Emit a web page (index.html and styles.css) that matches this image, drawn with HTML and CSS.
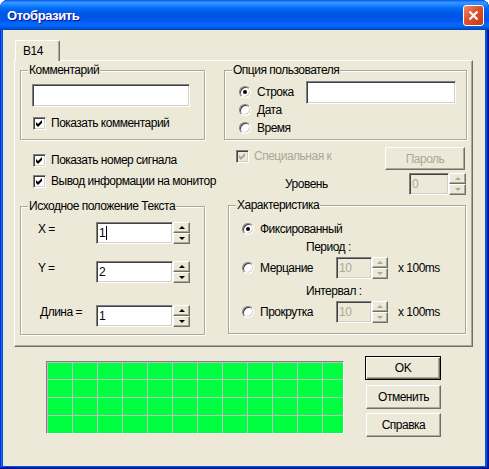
FILE: index.html
```html
<!DOCTYPE html>
<html>
<head>
<meta charset="UTF-8">
<title>Отобразить</title>
<link rel="stylesheet" href="styles.css">
</head>
<body>

<div class="window">

<div class="titlebar">
<span class="title">Отобразить</span>
<span class="close"><svg width="13" height="13" viewBox="0 0 13 13"><path d="M2.5 2.5 L10.5 10.5 M10.5 2.5 L2.5 10.5" stroke="#fff" stroke-width="2.2"/></svg></span>
</div>

<div class="client">

<div class="tabs"><div class="tab">B14</div></div>

<div class="panel">

<!-- comment / user option -->
<div class="row1">
<div class="group g-comment">
<span class="legend">Комментарий</span>
<div class="edit comment-edit"></div>
<div class="check comment-check"><span class="box"><svg width="9" height="9" viewBox="0 0 9 9"><polygon points="1,3 3,5 7,1 7,4 3,8 1,6"/></svg></span>Показать комментарий</div>
</div>
<div class="group g-user">
<span class="legend">Опция пользователя</span>
<div class="opt first"><span class="radio on"></span><span class="opt-text">Строка</span><div class="edit user-edit"></div></div>
<div class="opt"><span class="radio"></span><span class="opt-text">Дата</span></div>
<div class="opt"><span class="radio"></span><span class="opt-text">Время</span></div>
</div>
</div>

<!-- checkboxes / password -->
<div class="row2">
<div class="row2-left">
<div class="check first"><span class="box"><svg width="9" height="9" viewBox="0 0 9 9"><polygon points="1,3 3,5 7,1 7,4 3,8 1,6"/></svg></span>Показать номер сигнала</div>
<div class="check second"><span class="box"><svg width="9" height="9" viewBox="0 0 9 9"><polygon points="1,3 3,5 7,1 7,4 3,8 1,6"/></svg></span>Вывод информации на монитор</div>
</div>
<div class="row2-right">
<div class="special-row">
<div class="check disabled special"><span class="box"><svg width="9" height="9" viewBox="0 0 9 9"><polygon points="1,3 3,5 7,1 7,4 3,8 1,6"/></svg></span>Специальная к</div>
<div class="btn disabled pass">Пароль</div>
</div>
<div class="level-row">
<span class="level-label">Уровень</span>
<div class="spin disabled">
<div class="edit num level-edit">0</div>
<div class="arrows"><span class="arr up"></span><span class="arr down"></span></div>
</div>
</div>
</div>
</div>

<!-- position / characteristic -->
<div class="row3">
<div class="group g-pos">
<span class="legend">Исходное положение Текста</span>
<div class="field f1">
<span class="field-label">X =</span>
<div class="spin">
<div class="edit num pos-edit">1<span class="caret"></span></div>
<div class="arrows"><span class="arr up"></span><span class="arr down"></span></div>
</div>
</div>
<div class="field f2">
<span class="field-label">Y =</span>
<div class="spin">
<div class="edit num pos-edit">2</div>
<div class="arrows"><span class="arr up"></span><span class="arr down"></span></div>
</div>
</div>
<div class="field f3">
<span class="field-label len">Длина =</span>
<div class="spin">
<div class="edit num pos-edit">1</div>
<div class="arrows"><span class="arr up"></span><span class="arr down"></span></div>
</div>
</div>
</div>

<div class="group g-char">
<span class="legend">Характеристика</span>
<div class="opt fixed"><span class="radio on"></span><span class="opt-text">Фиксированный</span></div>
<div class="caption">Период :</div>
<div class="opt mode"><span class="radio"></span><span class="opt-text wide">Мерцание</span>
<div class="spin disabled">
<div class="edit num rate-edit">10</div>
<div class="arrows narrow"><span class="arr up"></span><span class="arr down"></span></div>
</div>
<span class="unit">x 100ms</span>
</div>
<div class="caption second">Интервал :</div>
<div class="opt mode"><span class="radio"></span><span class="opt-text wide">Прокрутка</span>
<div class="spin disabled">
<div class="edit num rate-edit">10</div>
<div class="arrows narrow"><span class="arr up"></span><span class="arr down"></span></div>
</div>
<span class="unit">x 100ms</span>
</div>
</div>
</div>

</div>

<div class="bottom">
<div class="lcd"></div>
<div class="buttons">
<div class="btn default">OK</div>
<div class="btn cancel">Отменить</div>
<div class="btn help">Справка</div>
</div>
</div>

</div>
</div>

</body>
</html>
```

FILE: styles.css
```css
body{
    margin:0;
    background:#fff;
    font-family:"Liberation Sans", Arial, sans-serif;
    font-size:12px;
    letter-spacing:-0.5px;
    color:#000;
}

.window{
    width:489px;
    height:469px;
    box-sizing:border-box;
    display:flex;
    flex-direction:column;
    background:#0054e3;
    border-radius:8px 8px 0 0;
    box-shadow:inset -1px -1px #00138c, inset 1px 1px #0831d9, inset -2px -2px #001ea0, inset 2px 2px #166aee;
}

/* title bar */
.titlebar{
    height:30px;
    flex:none;
    display:flex;
    align-items:center;
    justify-content:space-between;
    padding:0 5px 0 7px;
    border-radius:8px 8px 0 0;
    background:linear-gradient(to bottom,#0058ee 0%,#3a93ff 8%,#288eff 14%,#127dff 20%,#036ffc 26%,#0262ee 34%,#0057e5 46%,#0054e3 54%,#0055eb 64%,#005bf5 72%,#026afe 80%,#0062ef 88%,#0052d6 94%,#0040ab 100%);
}

.title{
    color:#fff;
    font-weight:bold;
    font-size:13px;
    letter-spacing:-0.4px;
    text-shadow:1px 1px #0f1089;
}

.close{
    width:21px;
    height:21px;
    box-sizing:border-box;
    border:1px solid #fff;
    border-radius:3px;
    background:linear-gradient(135deg,#f08a6c 0%,#e0502c 45%,#c8381a 100%);
    display:flex;
    align-items:center;
    justify-content:center;
}

/* dialog client area */
.client{
    flex:1;
    margin:0 4px 3px 3px;
    padding:10px 0 0 11px;
    background:#ece9d8;
}

.tabs{
    display:flex;
}

.tab{
    position:relative;
    z-index:1;
    margin:0 0 -1px 1px;
    width:45px;
    height:21px;
    box-sizing:border-box;
    padding-left:7px;
    line-height:20px;
    background:#ece9d8;
    border-top:1px solid #fff;
    border-left:1px solid #fff;
    border-right:1px solid #716f64;
    border-radius:2px 2px 0 0;
    box-shadow:inset -1px 0 #aca899;
}

.panel{
    width:459px;
    height:287px;
    box-sizing:border-box;
    padding:9px 0 0 5px;
    border:1px solid;
    border-color:#fff #716f64 #716f64 #fff;
    box-shadow:inset -1px -1px #aca899;
}

/* group boxes */
.group{
    position:relative;
    box-sizing:border-box;
    border:1px solid #aca899;
    box-shadow:inset 1px 1px #fff, 1px 1px #fff;
}

.legend{
    position:absolute;
    top:-8px;
    left:7px;
    padding:0 1px;
    line-height:14px;
    background:#ece9d8;
}

.row1{
    display:flex;
    gap:19px;
    height:70px;
}

.g-comment{
    width:185px;
    height:70px;
}

.g-user{
    width:243px;
    height:70px;
}

/* edit boxes */
.edit{
    box-sizing:border-box;
    background:#fff;
    border:1px solid;
    border-color:#808080 #fff #fff #808080;
    box-shadow:inset 1px 1px #404040, inset -1px -1px #d4d0c8;
}

.num{
    display:flex;
    align-items:center;
    padding-left:2px;
}

.caret{
    width:1px;
    height:14px;
    background:#000;
    margin-left:1px;
}

.comment-edit{
    margin:13px 0 0 11px;
    width:158px;
    height:23px;
}

.user-edit{
    width:150px;
    height:23px;
}

/* checkboxes */
.check{
    display:flex;
    align-items:center;
    height:18px;
}

.box{
    width:13px;
    height:13px;
    box-sizing:border-box;
    margin-right:5px;
    background:#fff;
    border:1px solid;
    border-color:#808080 #fff #fff #808080;
    box-shadow:inset 1px 1px #404040, inset -1px -1px #d4d0c8;
    display:flex;
    align-items:center;
    justify-content:center;
}

.box svg{
    fill:#000;
}

.check.disabled{
    color:#aca899;
}

.check.disabled .box{
    background:#ece9d8;
}

.check.disabled .box svg{
    fill:#aca899;
}

.comment-check{
    margin:7px 0 0 12px;
}

/* radio buttons */
.opt{
    display:flex;
    align-items:center;
    height:18px;
    padding-left:14px;
}

.opt.first{
    margin-top:12px;
}

.radio{
    position:relative;
    width:12px;
    height:12px;
    box-sizing:border-box;
    margin-right:6px;
    border-radius:50%;
    background:#fff;
    border:1px solid;
    border-color:#808080 #fff #fff #808080;
    box-shadow:inset 1px 1px #404040, inset -1px -1px #d4d0c8;
}

.radio.on::after{
    content:"";
    position:absolute;
    left:3px;
    top:3px;
    width:4px;
    height:4px;
    border-radius:50%;
    background:#000;
}

.opt-text{
    width:49px;
}

/* middle row */
.row2{
    display:flex;
    height:65px;
}

.row2-left{
    width:216px;
}

.row2-left .check{
    margin-left:13px;
}

.row2-left .first{
    margin-top:11px;
}

.row2-left .second{
    margin-top:3px;
}

.row2-right{
    width:230px;
}

.special-row{
    display:flex;
    align-items:center;
    justify-content:space-between;
    margin-top:7px;
    height:23px;
}

.special{
    margin-bottom:5px;
}

.level-row{
    display:flex;
    align-items:center;
    margin-top:3px;
}

.level-label{
    margin-left:49px;
    width:124px;
}

.level-edit{
    width:40px;
    height:22px;
}

/* spinners */
.spin{
    display:flex;
}

.arrows{
    display:flex;
    flex-direction:column;
    width:17px;
}

.arrows.narrow{
    width:16px;
}

.arr{
    flex:1;
    box-sizing:border-box;
    background:#ece9d8;
    border:1px solid;
    border-color:#fff #716f64 #716f64 #fff;
    box-shadow:inset -1px -1px #aca899;
    display:flex;
    align-items:center;
    justify-content:center;
}

.arr::after{
    content:"";
    border-left:3px solid transparent;
    border-right:3px solid transparent;
}

.up::after{
    border-bottom:3px solid #000;
}

.down::after{
    border-top:3px solid #000;
}

.spin.disabled .edit{
    background:#ece9d8;
    color:#aca899;
}

.spin.disabled .up::after{
    border-bottom-color:#aca899;
}

.spin.disabled .down::after{
    border-top-color:#aca899;
}

/* bottom group row */
.row3{
    display:flex;
    align-items:flex-start;
}

.g-pos{
    width:185px;
    height:129px;
    margin-top:1px;
}

.g-char{
    width:238px;
    height:129px;
    margin-left:23px;
}

.field{
    display:flex;
    align-items:flex-start;
    padding-left:17px;
    height:22px;
}

.f1{ margin-top:15px; }
.f2{ margin-top:17px; }
.f3{ margin-top:22px; }

.field-label{
    width:58px;
    line-height:14px;
}

.field-label.len{
    box-sizing:border-box;
    padding-left:2px;
}

.pos-edit{
    width:77px;
    height:22px;
}

.g-char .opt{
    padding-left:13px;
}

.opt.fixed{
    margin-top:14px;
}

.opt.mode{
    height:22px;
    margin-top:3px;
}

.opt-text.wide{
    width:76px;
}

.rate-edit{
    width:36px;
    height:22px;
}

.unit{
    margin-left:10px;
}

.caption{
    margin:2px 0 0 77px;
    line-height:14px;
}

.caption.second{
    margin-top:5px;
}

/* lcd preview and buttons */
.bottom{
    display:flex;
    margin-left:32px;
}

.lcd{
    margin-top:14px;
    width:298px;
    height:73px;
    box-sizing:border-box;
    border:1px solid;
    border-color:#808080 #fff #fff #808080;
    background-color:#00ff40;
    background-image:linear-gradient(to right,#c0c0c0 1px,transparent 1px),linear-gradient(#c0c0c0 1px,transparent 1px);
    background-size:25px 18px;
    background-position:0 0,0 17px;
    box-shadow:inset 0 1px #c0c0c0;
}

.buttons{
    margin:9px 0 0 21px;
    display:flex;
    flex-direction:column;
}

.btn{
    width:75px;
    height:24px;
    box-sizing:border-box;
    display:flex;
    align-items:center;
    justify-content:center;
    background:#ece9d8;
    border:1px solid;
    border-color:#fff #716f64 #716f64 #fff;
    box-shadow:inset -1px -1px #aca899;
}

.btn.default{
    width:76px;
    border-color:#000;
    box-shadow:inset 1px 1px #fff, inset -1px -1px #716f64, inset -2px -2px #aca899;
}

.btn.cancel{
    margin:5px 0 0 1px;
}

.btn.help{
    margin:4px 0 0 1px;
}

.btn.disabled{
    color:#aca899;
}

.pass{
    width:80px;
    height:23px;
    margin-right:1px;
}
```
